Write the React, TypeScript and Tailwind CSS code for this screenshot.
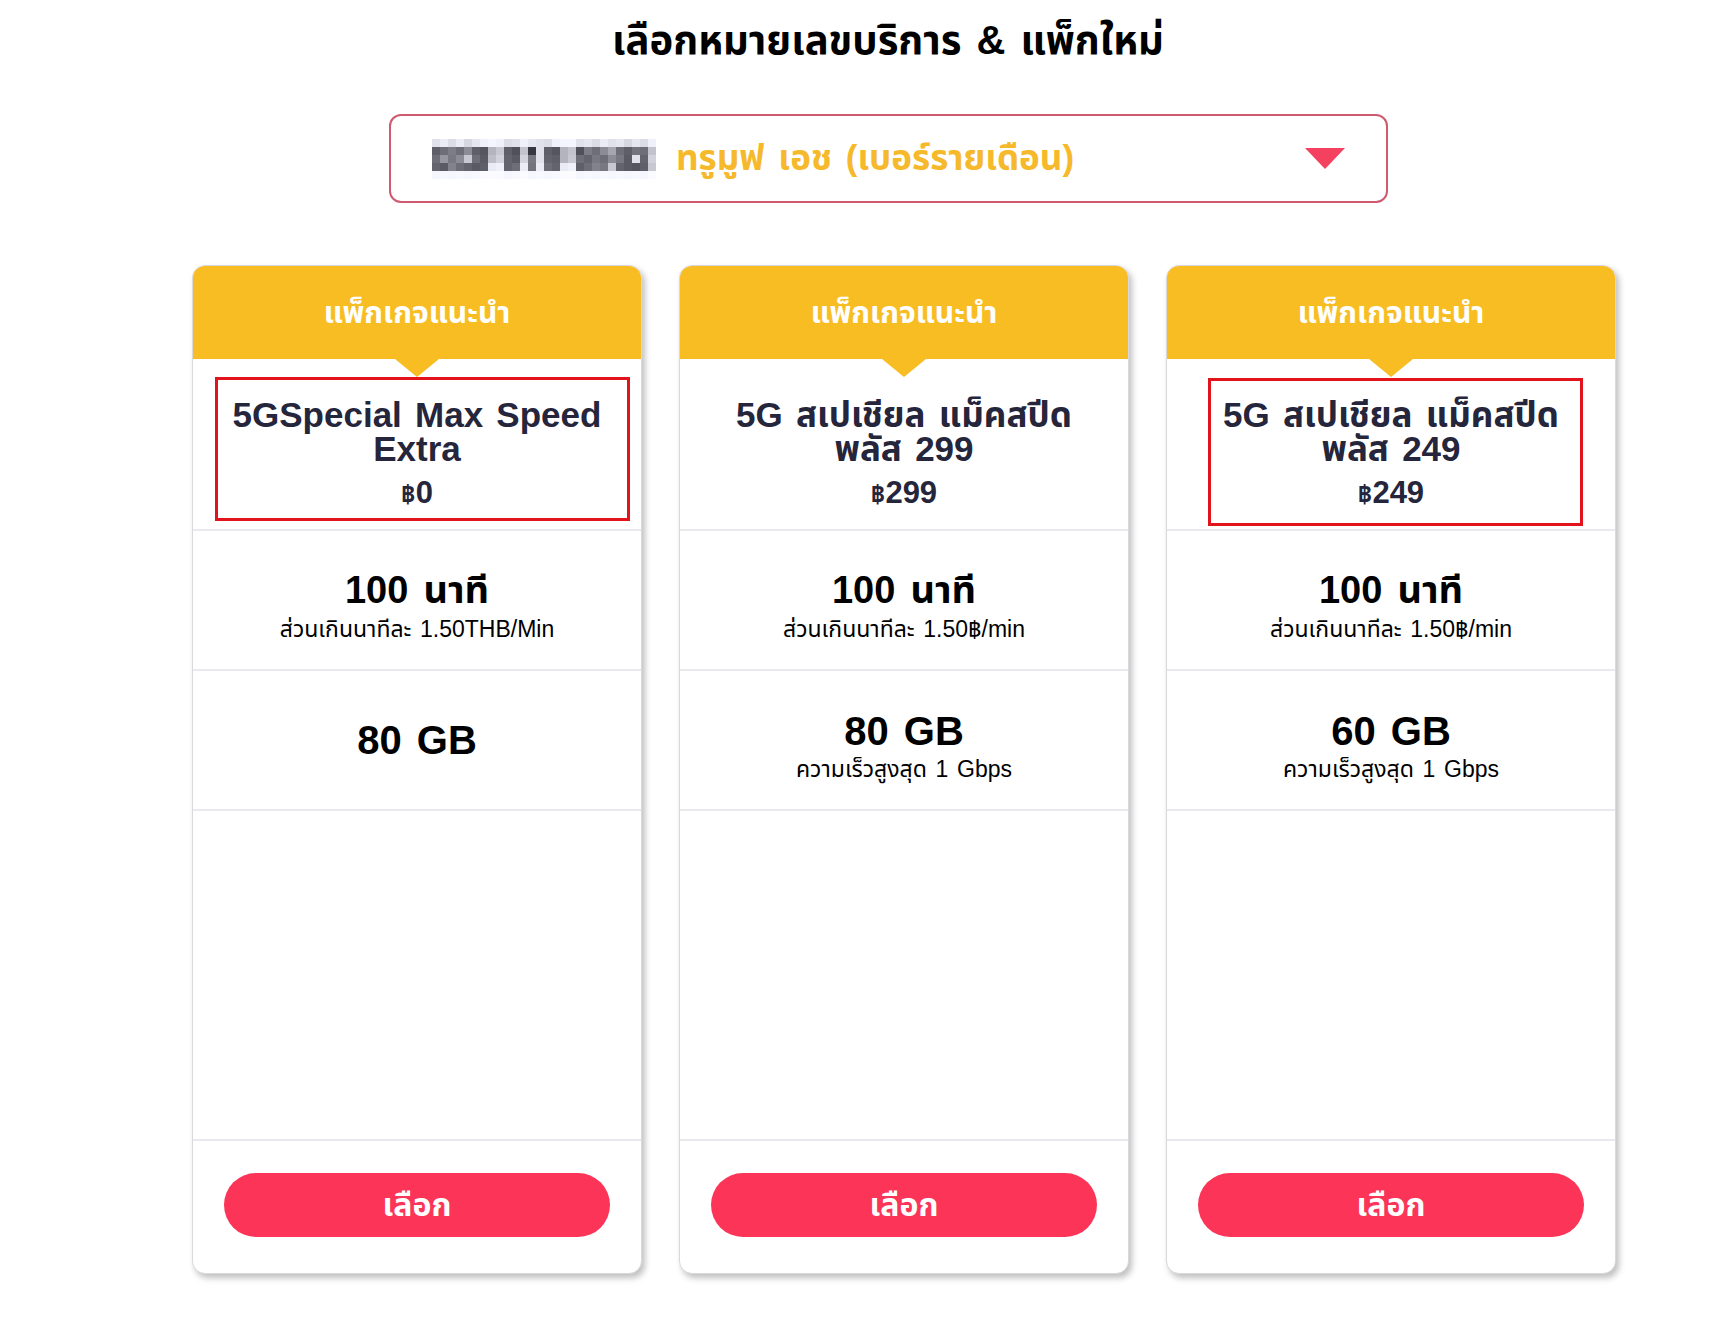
import React from 'react'

type Plan = {
  name: string
  price: string
  minutesNote: string
  data: string
  dataNote?: string
  mark?: string
}

const plans: Plan[] = [
  {
    name: '5GSpecial Max Speed Extra',
    price: '0',
    minutesNote: 'ส่วนเกินนาทีละ 1.50THB/Min',
    data: '80 GB',
    mark: 'left-[22px] right-[11px] top-[18px] bottom-[8px]',
  },
  {
    name: '5G สเปเชียล แม็คสปีด พลัส 299',
    price: '299',
    minutesNote: 'ส่วนเกินนาทีละ 1.50฿/min',
    data: '80 GB',
    dataNote: 'ความเร็วสูงสุด 1 Gbps',
  },
  {
    name: '5G สเปเชียล แม็คสปีด พลัส 249',
    price: '249',
    minutesNote: 'ส่วนเกินนาทีละ 1.50฿/min',
    data: '60 GB',
    dataNote: 'ความเร็วสูงสุด 1 Gbps',
    mark: 'left-[41px] right-[32px] top-[19px] bottom-[3px]',
  },
]

// pixelated (blurred) phone number, 28 x 5 blocks of 8px
const rows = [
  [225, 235, 220, 235, 215, 230, 240, 245, 240, 220, 225, 240, 230, 225, 220, 240, 245, 245, 225, 230, 220, 235, 225, 230, 215, 230, 220, 240],
  [95, 110, 125, 110, 140, 95, 85, 180, 200, 95, 80, 195, 55, 225, 95, 85, 180, 195, 80, 125, 110, 140, 165, 110, 95, 115, 110, 195],
  [110, 150, 120, 140, 200, 110, 90, 190, 210, 100, 90, 210, 120, 225, 100, 95, 180, 200, 110, 100, 120, 110, 140, 120, 90, 225, 100, 210],
  [100, 90, 130, 110, 100, 90, 95, 235, 240, 100, 110, 235, 115, 235, 110, 100, 235, 240, 95, 110, 130, 120, 200, 100, 90, 85, 95, 200],
  [246, 248, 246, 248, 246, 248, 250, 252, 250, 246, 248, 250, 246, 248, 246, 248, 252, 252, 246, 248, 246, 248, 246, 248, 246, 248, 246, 250],
]

function BlurredNumber() {
  return (
    <svg width="224" height="40" viewBox="0 0 224 40" className="shrink-0">
      {rows.map((row, r) =>
        row.map((v, c) => (
          <rect
            key={`${r}-${c}`}
            x={c * 8}
            y={r * 8}
            width="8"
            height="8"
            fill={`rgb(${v},${v},${Math.min(255, v + 10)})`}
          />
        ))
      )}
    </svg>
  )
}

function PlanCard({ plan }: { plan: Plan }) {
  return (
    <div className="flex w-[450px] flex-col rounded-[13px] border border-[#d9d9dd] bg-white shadow-[3px_4px_6px_rgba(0,0,0,0.25)]">
      {/* header */}
      <div className="relative flex h-[93px] items-center justify-center rounded-t-[12px] bg-[#f9bd24]">
        <span className="text-[30px] font-bold text-white">แพ็กเกจแนะนำ</span>
        <span className="absolute left-1/2 top-full h-0 w-0 -translate-x-1/2 border-x-[22px] border-t-[18px] border-x-transparent border-t-[#f9bd24]" />
      </div>

      {/* name + price */}
      <div className="relative flex h-[172px] flex-col items-center border-b-2 border-[#e9e9ed] px-6 pt-[39px] text-[#25253b]">
        <div className="text-center text-[35px] font-bold leading-[34px] [word-spacing:0.1em]">{plan.name}</div>
        <div className="mt-[12px] flex items-baseline text-[31px] font-semibold leading-[30px]">
          <span className="text-[25px] font-bold">฿</span>
          <span>{plan.price}</span>
        </div>
        {plan.mark && <div className={`absolute border-[3px] border-[#e3131b] ${plan.mark}`} />}
      </div>

      {/* minutes */}
      <div className="flex h-[140px] flex-col items-center border-b-2 border-[#e9e9ed] pt-[40px] text-black">
        <div className="text-[38px] font-bold leading-[38px] [word-spacing:0.12em]">100 นาที</div>
        <div className="mt-[9px] text-[23px] leading-[23px] [word-spacing:0.1em]">{plan.minutesNote}</div>
      </div>

      {/* data */}
      <div
        className={`flex h-[140px] flex-col items-center border-b-2 border-[#e9e9ed] text-black ${
          plan.dataNote ? 'pt-[40px]' : 'justify-center'
        }`}
      >
        <div className="text-[40px] font-bold leading-[40px] [word-spacing:0.1em]">{plan.data}</div>
        {plan.dataNote && (
          <div className="mt-[7px] text-[23px] leading-[23px] [word-spacing:0.1em]">{plan.dataNote}</div>
        )}
      </div>

      {/* spacer */}
      <div className="h-[330px] border-b-2 border-[#e9e9ed]" />

      {/* action */}
      <div className="h-[132px] px-[31px] pt-[32px]">
        <button className="flex h-[64px] w-full items-center justify-center rounded-full bg-[#fb3458] text-[32px] font-bold text-white">
          เลือก
        </button>
      </div>
    </div>
  )
}

export default function App() {
  return (
    <div className="min-h-screen bg-white pt-[14px] font-['Liberation_Sans','Noto_Sans_Thai','Noto_Sans',sans-serif]">
      <h1 className="h-[52px] pl-[40px] text-center text-[40px] font-bold leading-[52px] text-black [word-spacing:0.1em]">
        เลือกหมายเลขบริการ &amp; แพ็กใหม่
      </h1>

      {/* number selector */}
      <div className="ml-[389px] mt-[48px] flex h-[89px] w-[999px] items-center rounded-[12px] border-2 border-[#cf5a70] pl-[41px] pr-[41px]">
        <BlurredNumber />
        <span className="ml-[20px] text-[35px] font-bold text-[#f6b92b] [word-spacing:0.12em]">
          ทรูมูฟ เอช (เบอร์รายเดือน)
        </span>
        <svg width="40" height="21" viewBox="0 0 40 21" className="ml-auto">
          <polygon points="0,0 40,0 20,21" fill="#f3415f" />
        </svg>
      </div>

      {/* plans */}
      <div className="ml-[192px] mt-[62px] flex gap-[37px] pb-[60px]">
        {plans.map((p) => (
          <PlanCard key={p.price} plan={p} />
        ))}
      </div>
    </div>
  )
}
